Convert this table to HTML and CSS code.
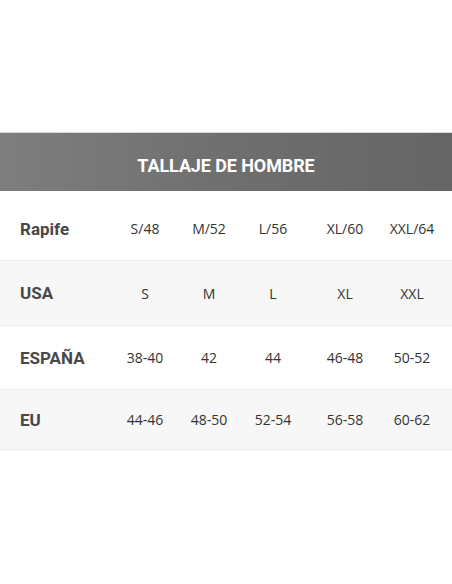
FILE: index.html
```html
<!DOCTYPE html>
<html lang="es">
<head>
<meta charset="utf-8">
<title>Tallaje de hombre</title>
<link rel="stylesheet" href="styles.css">
</head>
<body>
<div class="page">
  <div class="table">
    <div class="head">TALLAJE DE HOMBRE</div>
    <div class="row r1">
      <div class="label">Rapife</div>
      <div class="cell">S/48</div><div class="cell">M/52</div><div class="cell">L/56</div><div class="cell">XL/60</div><div class="cell">XXL/64</div>
    </div>
    <div class="row r2 alt">
      <div class="label">USA</div>
      <div class="cell">S</div><div class="cell">M</div><div class="cell">L</div><div class="cell">XL</div><div class="cell">XXL</div>
    </div>
    <div class="row r3">
      <div class="label">ESPAÑA</div>
      <div class="cell">38-40</div><div class="cell">42</div><div class="cell">44</div><div class="cell">46-48</div><div class="cell">50-52</div>
    </div>
    <div class="row r4 alt">
      <div class="label">EU</div>
      <div class="cell">44-46</div><div class="cell">48-50</div><div class="cell">52-54</div><div class="cell">56-58</div><div class="cell">60-62</div>
    </div>
  </div>
</div>
</body>
</html>
```
FILE: styles.css
```css
html, body {
  margin: 0;
  padding: 0;
  background: #ffffff;
}
.page {
  width: 452px;
  height: 584px;
  padding-top: 132px;
  box-sizing: border-box;
  font-family: "Open Sans", "DejaVu Sans", sans-serif;
}
.head {
  height: 59px;
  border-top: 1px solid #d8d8d8;
  background: linear-gradient(to right, #7e7e7e 0%, #6f6f6f 50%, #656565 100%);
  color: #ffffff;
  font-family: Roboto, "Open Sans", sans-serif;
  font-weight: 700;
  font-size: 18px;
  letter-spacing: -0.1px;
  display: flex;
  align-items: center;
  justify-content: center;
  padding-top: 6px;
  box-sizing: border-box;
}
.row {
  display: grid;
  grid-template-columns: 113px 64px 64px 64px 80px 54px 1fr;
  align-items: center;
  border-bottom: 1px solid #ececec;
  background: #ffffff;
  color: #3a3a3a;
}
.row.alt {
  background: #f7f7f7;
}
.r1 { height: 70px; padding-top: 6px; box-sizing: border-box; }
.r2 { height: 64px; }
.r3 { height: 63px; }
.r4 { height: 59px; }
.label {
  padding-left: 20px;
  font-family: Roboto, "Open Sans", sans-serif;
  font-weight: 700;
  font-size: 17px;
  color: #474747;
}
.cell {
  text-align: center;
  font-size: 14px;
  color: #333333;
}
```
